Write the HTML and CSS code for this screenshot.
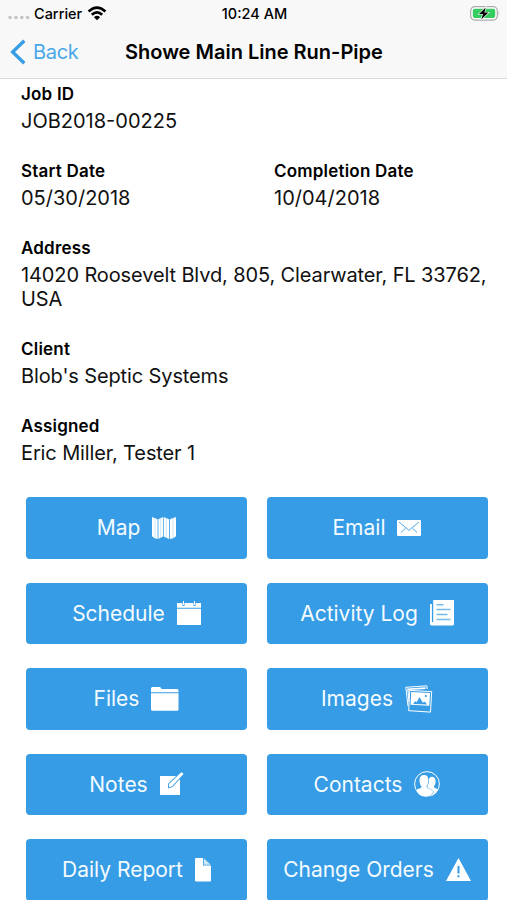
FILE: index.html
```
<!DOCTYPE html>
<html lang="en">
<head>
<meta charset="utf-8">
<title>Showe Main Line Run-Pipe</title>
<link rel="stylesheet" href="styles.css">
</head>
<body>
<header class="top">
  <div class="status">
    <div class="carrier">
      <svg width="22" height="5" viewBox="0 0 22 5" fill="#c4c4c6"><circle cx="2.1" cy="2.5" r="1.8"/><circle cx="8" cy="2.5" r="1.8"/><circle cx="13.8" cy="2.5" r="1.8"/><circle cx="19.6" cy="2.5" r="1.8"/></svg>
      <span class="carrier-name">Carrier</span>
      <svg width="20" height="15" viewBox="0 0 20 15" fill="none" stroke="#000" stroke-width="2.7"><path d="M1.6 5.5Q10-2.2 18.4 5.5M4.8 8.8Q10 4.1 15.2 8.8"/><path d="M10 14.2 6.9 11.2Q10 8.5 13.1 11.2Z" fill="#000" stroke="none"/></svg>
    </div>
    <span class="time">10:24 AM</span>
    <svg class="battery" width="31" height="15" viewBox="0 0 31 15"><rect x=".7" y=".7" width="26.6" height="13.4" rx="4" fill="#fff" stroke="#a9adaa" stroke-width="1.2"/><rect x="2.8" y="2.8" width="22.4" height="9.2" rx="2" fill="#35cc60"/><path d="M28.6 5.2q1.8 2.1 0 4.2z" fill="#a9adaa"/><path d="M15.7 1.5 9 8h4l-1.7 5.5L18.4 6.5h-4z" fill="#000" stroke="#fff" stroke-width="1.2" paint-order="stroke"/></svg>
  </div>
  <nav class="nav">
    <a class="back"><svg width="16" height="26" viewBox="0 0 16 26" fill="none" stroke="#369ce5" stroke-width="3.3"><path d="M14.3 1.7 2.6 13l11.7 11.3"/></svg><span class="back-label">Back</span></a>
    <h1 class="title">Showe Main Line Run-Pipe</h1>
  </nav>
</header>
<main>
  <dl class="details">
    <div class="field wide"><dt>Job ID</dt><dd class="numeric">JOB2018-00225</dd></div>
    <div class="field"><dt>Start Date</dt><dd class="numeric">05/30/2018</dd></div>
    <div class="field"><dt>Completion Date</dt><dd class="numeric">10/04/2018</dd></div>
    <div class="field wide"><dt>Address</dt><dd>14020 Roosevelt Blvd, 805, Clearwater, FL 33762, USA</dd></div>
    <div class="field wide"><dt>Client</dt><dd>Blob's Septic Systems</dd></div>
    <div class="field wide"><dt>Assigned</dt><dd>Eric Miller, Tester 1</dd></div>
  </dl>
  <div class="actions">
    <button><span>Map</span><svg width="24" height="24" viewBox="0 0 24 24"><path d="M0 1 5.6 3.3V23Q2.5 22.6 0 20.2zM6.4 3.3 11 1v19.5L6.4 23zM11.7 1 17 3.3V23l-5.3-2.5zM17.8 3.3 24 1v19.2Q21.5 22.6 17.8 23z"/><path class="line fold" d="M3 2v20M8.7 2v20M14.4 2v20M21 2v20"/></svg></button>
    <button><span>Email</span><svg width="24" height="16" viewBox="0 0 24 16"><rect width="24" height="16" rx="1"/><path class="line thin" d="m2 2 10 8.3L22 2M4 12.5l4.5-4.3M20 12.5l-4.5-4.3"/></svg></button>
    <button><span>Schedule</span><svg width="24" height="24" viewBox="0 0 24 24"><path d="M0 2h5.5v3h2V2h9v3h2V2H24v4.8H0zM0 7.7h24V24H0zM6 0h1v4H6zM17 0h1v4h-1z"/></svg></button>
    <button><span>Activity Log</span><svg width="24" height="26" viewBox="0 0 24 26"><path d="M3.2 0H24v24q0 1.5-1.5 1.5h-21Q0 25.500 0 24V4h1.900v18h1.300z"/><path class="line rule" d="M6.500 4.700h7M6.500 9.500h14M6.500 14.500h11M6.500 19.500h14"/></svg></button>
    <button><span>Files</span><svg width="28" height="24" viewBox="0 0 28 24"><path d="M0 5.300V1.500Q0 0 1.500 0h7Q10 0 10.500 2H26q1.500 0 1.500 1.500v1.800zM0 6.200h27.500v16q0 1.500-1.500 1.500H1.500Q0 23.700 0 22.200z"/></svg></button>
    <button><span>Images</span><svg width="28" height="28" viewBox="0 0 28 28"><path class="outline" d="M3 21 .8 2.300 21.800.8l.4 3.200"/><path d="M2.200 3.500 20.500 2.200l.1 1.700L3.600 5l.7 11.500-.8 1z"/><path class="outline" d="m4.700 5.400 22 1.200-1.200 20.500L3.700 25.700z"/><path fill-rule="evenodd" d="m6.200 7.100 18.900 1-.8 12.700-18.800-1zM8.300 19l1.700-2.700 1.800.6 2.700-5 3.200 5.600 2.200-.8 2.200 2.900zM20.800 9.900a1.100 1.100 0 1 0 .1 0z"/></svg></button>
    <button><span>Notes</span><svg width="24" height="24" viewBox="0 0 24 24"><path d="M0 4h20v19H0z"/><path class="pencil" d="M9 15.300v-3.200L21 .5q2-.4 2.500 1.500L12 14.300z"/></svg></button>
    <button><span>Contacts</span><svg width="26" height="26" viewBox="0 0 26 26"><circle class="outline ring" cx="13" cy="13" r="12.400"/><path d="M17.500 5.800c2.800 0 4.300 1.900 4.100 4.900 0 2.300-.8 3.600-1.700 4.800.1 1.800 2.600 1.600 4.200 2.900-2 3.700-4.500 5.800-8 6.800l-3-9 1.500-5c0-3.300 1-5.400 2.900-5.400z"/><path class="person" d="M10 4c3.300 0 4.600 2.300 4.400 5.600-.1 3-.8 4.600-2 6 .1 2.600 5.800 2.400 7 5.500l-2.600 3.500C10.500 27.300 4.300 24.500 2 18.900c1.900-1.200 5.400-.9 5.600-3.300-1.300-1.400-2-3-2.100-6C5.300 6.300 6.700 4 10 4z"/></svg></button>
    <button><span>Daily Report</span><svg width="16" height="24" viewBox="0 0 16 24"><path d="M1 0h7v7.500h8v15q0 1-1 1H1q-1 0-1-1V1q0-1 1-1z"/><path d="M8.800.3 15.700 6.800H8.800z" opacity=".75"/></svg></button>
    <button><span>Change Orders</span><svg width="25" height="23" viewBox="0 0 25 23"><path d="M12.500 0 25 23H0z"/><path class="line mark" d="M12.500 8v7.500M12.500 17.200v2"/></svg></button>
  </div>
</main>
</body>
</html>
```
FILE: styles.css
```
* { box-sizing: border-box; }
body { margin: 0; height: 900px; overflow: hidden; background: #fff; color: #111; font-family: Inter, "Liberation Sans", sans-serif; }
.top { height: 79px; background: #f8f8f8; border-bottom: 1px solid #d9d9da; }
.status { height: 26px; display: grid; grid-template-columns: 1fr auto 1fr; align-items: center; padding: 0 6px 0 8px; color: #000; font-size: 14.5px; font-weight: 500; }
.carrier { display: flex; align-items: center; gap: 5px; }
.carrier svg:first-child { margin-top: 8px; }
.carrier-name { margin-left: -1px; }
.battery { justify-self: end; }
.nav { display: grid; grid-template-columns: 115px 1fr; align-items: center; height: 52px; padding-left: 10px; }
.back { display: flex; align-items: center; gap: 7px; color: #4aa8e9; font-size: 20px; letter-spacing: -.3px; }
.title { margin: 0; color: #000; font-size: 20px; font-weight: 600; white-space: nowrap; }
.details { margin: 0; padding: 3.5px 0 0 21px; display: grid; grid-template-columns: 253px 1fr; row-gap: 26.5px; }
.field { min-width: 0; }
.wide { grid-column: 1 / -1; }
dt { height: 24px; line-height: 22px; font-size: 17px; font-weight: 600; letter-spacing: .2px; color: #000; }
dd { margin: 0; padding-top: 2px; line-height: 24.5px; font-size: 20px; letter-spacing: -.12px; }
.numeric { letter-spacing: 0; }
.actions { display: grid; grid-template-columns: 221px 221px; grid-auto-rows: 61.5px; gap: 24px 19.5px; padding: 0 0 0 26px; margin-top: 31.5px; }
button { display: flex; align-items: center; justify-content: center; gap: 12px; padding: 0; border: 0; border-radius: 4px; background: #369ce5; color: #f4fbff; font: 400 21px Inter, "Liberation Sans", sans-serif; }
button svg { fill: #fff; flex: none; }
button .line { fill: none; stroke: #369ce5; stroke-width: 1.2; }
button .thin { stroke-width: .9; }
button .rule { stroke-width: 1.4; stroke: #75bcec; }
button .fold { stroke: #b9ddf6; stroke-width: .7; }
button .mark { stroke-width: 2; }
button .outline { fill: none; stroke: #fff; stroke-width: 1; }
button .pencil { fill: #fff; stroke: #369ce5; stroke-width: 1.8; paint-order: stroke; }
button .person { fill: #fff; stroke: #369ce5; stroke-width: 1; paint-order: stroke; }
```
